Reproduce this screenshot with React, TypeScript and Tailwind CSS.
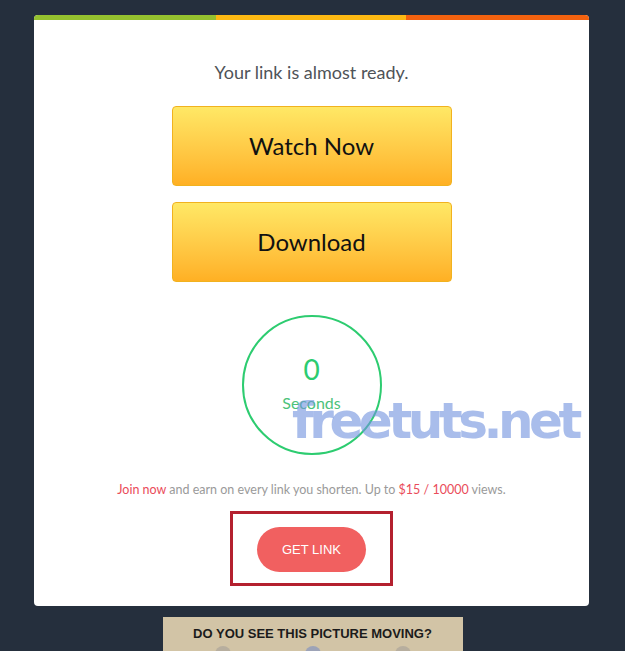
import React from 'react';

const font = { fontFamily: 'Lato, "Noto Sans", sans-serif' };

export default function App() {
  return (
    <div className="relative min-h-[651px] w-[625px] overflow-hidden bg-[#252f3d] pt-[15px]" style={font}>
      {/* main card */}
      <div className="ml-[34px] w-[555px] overflow-hidden rounded-[4px] bg-white pb-[20px]">
        <div className="flex h-[5px]">
          <div className="w-[182px] bg-[#95c12f]" />
          <div className="w-[190px] bg-[#fdb913]" />
          <div className="flex-1 bg-[#f3620f]" />
        </div>

        <div className="flex flex-col items-center">
          <p className="mt-[39px] text-[18px] leading-[26px] text-[#4f5358]">Your link is almost ready.</p>

          <button className="mt-[21px] h-[80px] w-[280px] rounded-[4px] border border-[#f1b21f] bg-gradient-to-b from-[#ffe865] to-[#ffb023] text-[24px] text-[#111]">
            Watch Now
          </button>
          <button className="mt-[16px] h-[80px] w-[280px] rounded-[4px] border border-[#f1b21f] bg-gradient-to-b from-[#ffe865] to-[#ffb023] text-[24px] text-[#111]">
            Download
          </button>

          <div className="mt-[33px] flex h-[140px] w-[140px] flex-col items-center justify-center rounded-full border-2 border-[#2dcc70]">
            <span className="mt-[-4px] text-[28px] leading-[32px] text-[#2dcc70]">0</span>
            <span className="mt-[8px] text-[16px] leading-[20px] text-[#4cc27a]">Seconds</span>
          </div>

          <p className="mt-[26px] text-[12.5px] leading-[18px] text-[#9a9a9a]">
            <span className="text-[#ea4c5a]">Join now</span> and earn on every link you shorten. Up to{' '}
            <span className="text-[#ea4c5a]">$15 / 10000</span> views.
          </p>

          <div className="mt-[12px] border-[3px] border-[#b4202f] px-[24px] pt-[13px] pb-[11px]">
            <button
              className="h-[45px] w-[109px] rounded-full bg-[#f16060] text-[13px] text-white"
              style={{ fontFamily: '"Liberation Sans", Arial, sans-serif' }}
            >
              GET LINK
            </button>
          </div>
        </div>
      </div>

      {/* ad picture */}
      <div className="mx-auto mt-[11px] h-[40px] w-[300px] bg-[#d2c4a6] pt-[9px] text-center">
        <p
          className="text-[13px] leading-[15px] font-bold text-[#1b1b1b]"
          style={{ fontFamily: '"Liberation Sans", Arial, sans-serif' }}
        >
          DO YOU SEE THIS PICTURE MOVING?
        </p>
        <div className="mt-[5px] flex justify-center gap-[74px]">
          <div className="h-[16px] w-[16px] rounded-full bg-[#b7ae9e]" />
          <div className="h-[16px] w-[16px] rounded-full bg-[#9da3b7]" />
          <div className="h-[16px] w-[16px] rounded-full bg-[#b7ae9e]" />
        </div>
      </div>

      {/* watermark */}
      <span
        className="pointer-events-none absolute left-[292px] top-[396px] text-[50px] leading-none font-bold tracking-[-4.5px] text-[rgba(112,145,222,0.6)]"
        style={{ fontFamily: '"DejaVu Sans", sans-serif' }}
      >
        freetuts.net
      </span>
    </div>
  );
}
